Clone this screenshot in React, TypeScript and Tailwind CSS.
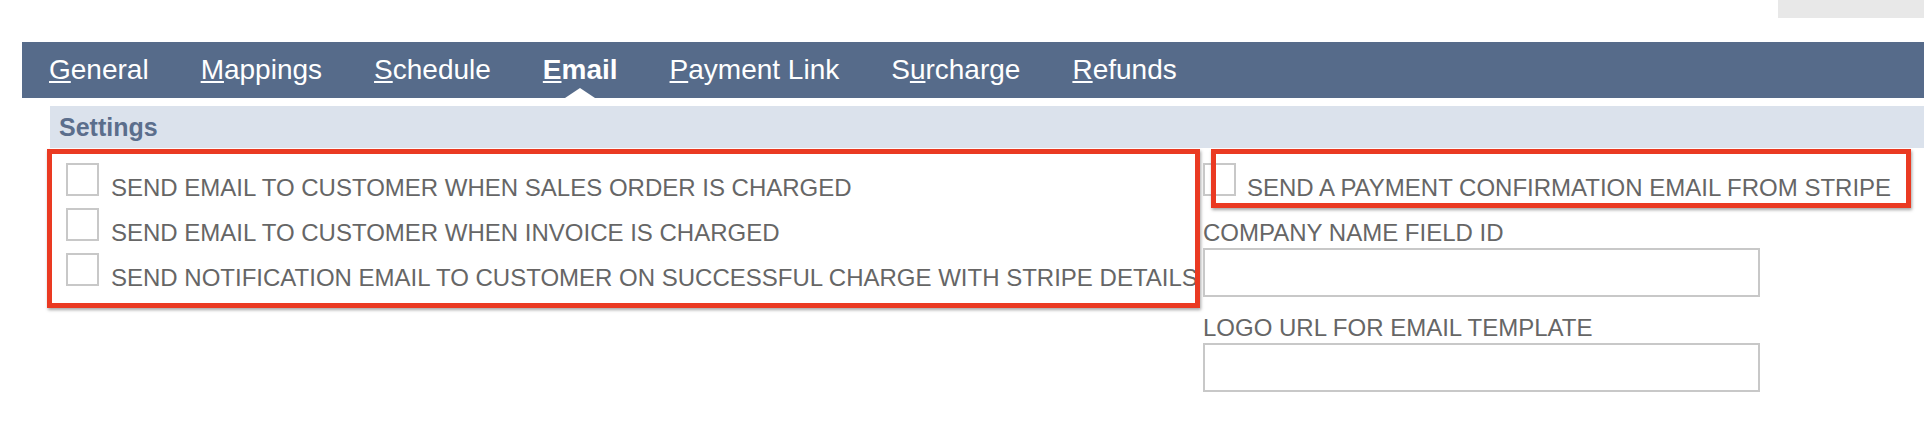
const tabs = [
  { pre: "", key: "G", post: "eneral" },
  { pre: "", key: "M", post: "appings" },
  { pre: "", key: "S", post: "chedule" },
  { pre: "", key: "E", post: "mail", active: true },
  { pre: "", key: "P", post: "ayment Link" },
  { pre: "S", key: "u", post: "rcharge" },
  { pre: "", key: "R", post: "efunds" },
];

const leftOptions = [
  "SEND EMAIL TO CUSTOMER WHEN SALES ORDER IS CHARGED",
  "SEND EMAIL TO CUSTOMER WHEN INVOICE IS CHARGED",
  "SEND NOTIFICATION EMAIL TO CUSTOMER ON SUCCESSFUL CHARGE WITH STRIPE DETAILS",
];

function Box() {
  return <span className="block h-[33px] w-[33px] shrink-0 border-2 border-[#c8c8c8] bg-white" />;
}

function CheckRow({ label, gap }: { label: string; gap: string }) {
  return (
    <label className={`flex items-baseline ${gap}`}>
      <Box />
      <span className="whitespace-nowrap">{label}</span>
    </label>
  );
}

export default function App() {
  return (
    <div className="min-h-[430px] bg-white font-['Liberation_Sans',Arial,sans-serif]">
      <div className="flex h-[18px] justify-end">
        <div className="w-[146px] bg-[#e8e8e8]" />
      </div>

      <nav className="ml-[22px] mt-[24px] flex h-[56px] gap-[52px] bg-[#566b8a] pl-[27px] text-[28px] leading-none text-white">
        {tabs.map((t) => (
          <div
            key={t.key + t.post}
            className={`relative flex h-full items-center ${t.active ? "font-bold" : ""}`}
          >
            <span>
              {t.pre}
              <span className="underline decoration-[2px] underline-offset-[2px]">{t.key}</span>
              {t.post}
            </span>
            {t.active && (
              <span className="absolute bottom-0 left-1/2 h-0 w-0 -translate-x-1/2 border-x-[15px] border-b-[10px] border-x-transparent border-b-white" />
            )}
          </div>
        ))}
      </nav>

      <div className="ml-[50px] mt-[8px]">
        <div className="flex h-[42px] items-center bg-[#dbe2ec] pl-[9px] text-[25px] font-bold leading-none text-[#5b6e8c]">
          Settings
        </div>

        <div className="flex text-[24px] leading-none text-[#666666]">
          <div className="relative w-[1153px] pl-[16px] pt-[15px]">
            <div className="flex flex-col gap-[8px]">
              {leftOptions.map((o) => (
                <CheckRow key={o} label={o} gap="gap-[12px]" />
              ))}
            </div>
            <div className="pointer-events-none absolute left-[-3px] top-[1px] h-[159px] w-[1153px] border-[5px] border-[#ea3a22] shadow-[1px_2px_3px_rgba(0,0,0,0.35)]" />
          </div>

          <div className="relative pt-[15px]">
            <CheckRow label="SEND A PAYMENT CONFIRMATION EMAIL FROM STRIPE" gap="gap-[11px]" />

            <div className="mt-[21px] leading-[24px]">COMPANY NAME FIELD ID</div>
            <input
              type="text"
              className="mt-[3px] block h-[49px] w-[557px] border-2 border-[#c8c8c8] bg-white"
            />

            <div className="mt-[19px] leading-[24px]">LOGO URL FOR EMAIL TEMPLATE</div>
            <input
              type="text"
              className="mt-[3px] block h-[49px] w-[557px] border-2 border-[#c8c8c8] bg-white"
            />

            <div className="pointer-events-none absolute left-[8px] top-[1px] h-[59px] w-[700px] border-[5px] border-[#ea3a22] shadow-[1px_2px_3px_rgba(0,0,0,0.35)]" />
          </div>
        </div>
      </div>
    </div>
  );
}
